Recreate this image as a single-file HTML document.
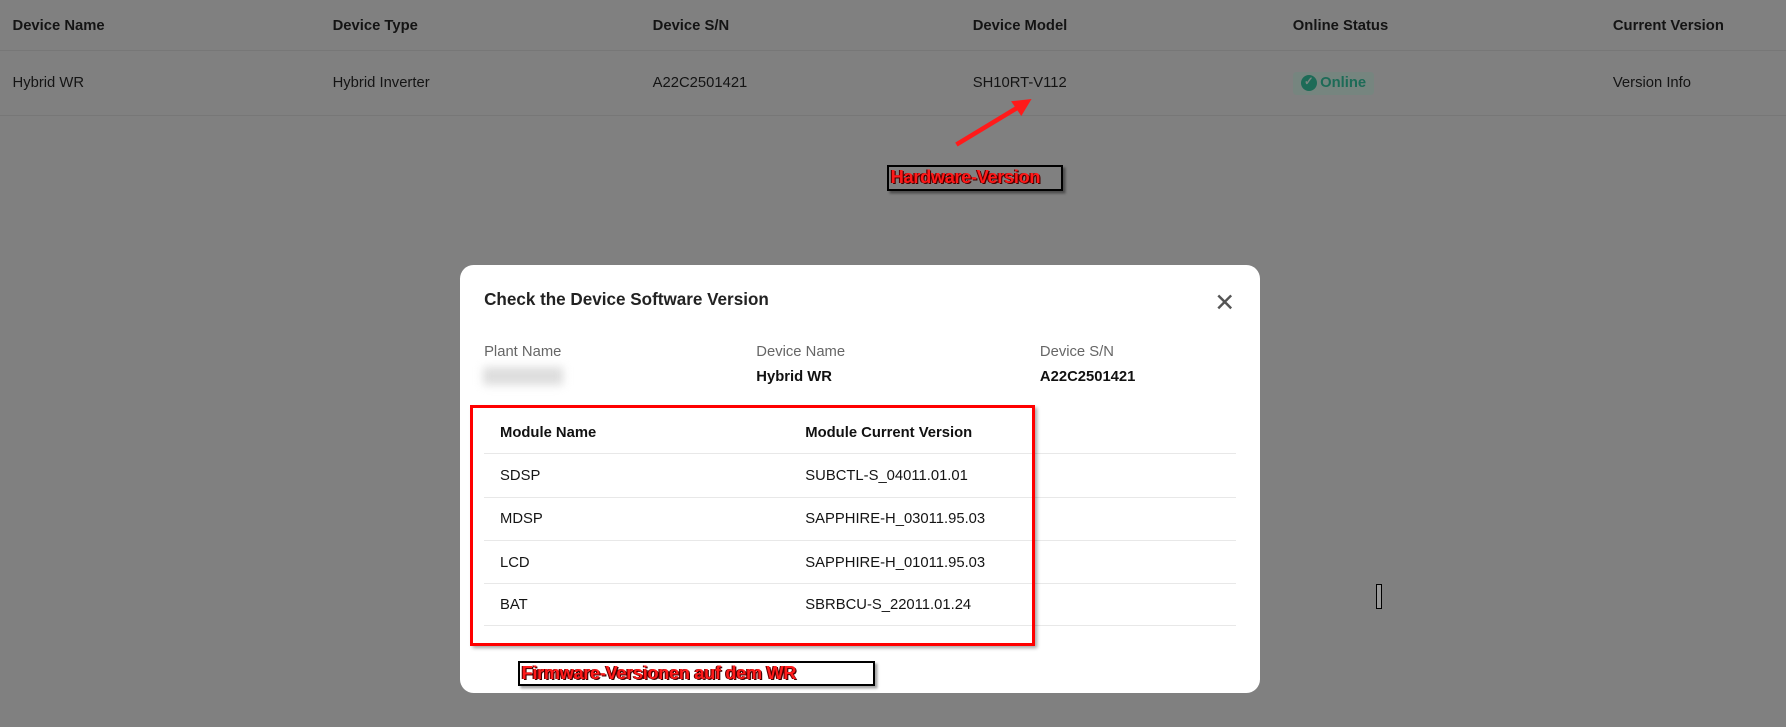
<!DOCTYPE html>
<html><head><meta charset="utf-8"><style>
html,body{margin:0;padding:0}
body{width:1568px;height:638px;zoom:1.13903;background:#808080;font-family:"Liberation Sans",sans-serif;position:relative;overflow:hidden;color:#111}
.a{position:absolute;white-space:nowrap}
.h{font-size:13px;font-weight:bold;color:#141414}
.r{font-size:13px;color:#141414}
.line{position:absolute;height:1px;background:#777}
.m{position:absolute;left:404px;top:233px;width:702px;height:375px;background:#fff;border-radius:12px}
.lab{font-size:13px;color:#666}
.val{font-size:13px;font-weight:bold;color:#111}
.tl{position:absolute;left:21px;width:660px;height:1px;background:#e8e8e8}
.red{color:#ff1a1a;font-weight:bold;font-size:16px;letter-spacing:-0.3px;text-shadow:1px 1px 0 #400,-1px 0 0 #600}
</style></head><body>
<div class="a h" style="left:11px;top:16px">Device Name</div>
<div class="a h" style="left:292px;top:16px">Device Type</div>
<div class="a h" style="left:573px;top:16px">Device S/N</div>
<div class="a h" style="left:854px;top:16px">Device Model</div>
<div class="a h" style="left:1135px;top:16px">Online Status</div>
<div class="a h" style="left:1416px;top:16px">Current Version</div>
<div class="line" style="left:0;top:44px;width:1568px"></div>
<div class="a r" style="left:11px;top:66px">Hybrid WR</div>
<div class="a r" style="left:292px;top:66px">Hybrid Inverter</div>
<div class="a r" style="left:573px;top:66px">A22C2501421</div>
<div class="a r" style="left:854px;top:66px">SH10RT-V112</div>
<div class="a" style="left:1135px;top:63px;width:71px;height:20px;background:#76857f;border-radius:3px"></div>
<div class="a" style="left:1142px;top:66px;width:14px;height:14px;border-radius:50%;background:#1d6b57;color:#7a8782;font-size:10px;line-height:14px;text-align:center;font-weight:bold">✓</div>
<div class="a" style="left:1159px;top:66px;font-size:13px;font-weight:bold;color:#1d6b57">Online</div>
<div class="a r" style="left:1416px;top:66px">Version Info</div>
<div class="line" style="left:0;top:101px;width:1568px"></div>
<svg class="a" style="left:830px;top:80px" width="90" height="55"><line x1="10" y1="47" x2="68" y2="12" stroke="#ff1a1a" stroke-width="4"/><polygon points="76,7 58,9 67,22" fill="#ff1a1a"/></svg>
<div class="a" style="left:779px;top:145px;width:151px;height:19px;border:2px solid #000;box-shadow:2px 2px 2px rgba(0,0,0,.4)"></div>
<div class="a red" style="left:782px;top:147px">Hardware-Version</div>
<div class="a" style="left:1208px;top:513px;width:4px;height:20px;border:1px solid #000;background:#999"></div>
<div class="m">
<div class="a" style="left:21px;top:22px;font-size:15px;font-weight:bold;color:#222">Check the Device Software Version</div>
<div class="a" style="left:662px;top:20px;font-size:22px;color:#555">✕</div>
<div class="a lab" style="left:21px;top:69px">Plant Name</div>
<div class="a lab" style="left:260px;top:69px">Device Name</div>
<div class="a lab" style="left:509px;top:69px">Device S/N</div>
<div class="a" style="left:20px;top:89px;width:70px;height:16px;background:#ddd;filter:blur(4px)"></div>
<div class="a val" style="left:260px;top:91px">Hybrid WR</div>
<div class="a val" style="left:509px;top:91px">A22C2501421</div>
<div class="a val" style="left:35px;top:140px">Module Name</div>
<div class="a val" style="left:303px;top:140px">Module Current Version</div>
<div class="tl" style="top:165px"></div>
<div class="a r" style="left:35px;top:178px">SDSP</div><div class="a r" style="left:303px;top:178px">SUBCTL-S_04011.01.01</div>
<div class="tl" style="top:203px"></div>
<div class="a r" style="left:35px;top:216px">MDSP</div><div class="a r" style="left:303px;top:216px">SAPPHIRE-H_03011.95.03</div>
<div class="tl" style="top:241px"></div>
<div class="a r" style="left:35px;top:254px">LCD</div><div class="a r" style="left:303px;top:254px">SAPPHIRE-H_01011.95.03</div>
<div class="tl" style="top:279px"></div>
<div class="a r" style="left:35px;top:291px">BAT</div><div class="a r" style="left:303px;top:291px">SBRBCU-S_22011.01.24</div>
<div class="tl" style="top:316px"></div>
<div class="a" style="left:9px;top:123px;width:490px;height:206px;border:3px solid #ff0000;box-shadow:2px 2px 3px rgba(0,0,0,.35)"></div>
<div class="a" style="left:51px;top:347px;width:310px;height:19px;border:2px solid #000;box-shadow:2px 2px 2px rgba(0,0,0,.35)"></div>
<div class="a red" style="left:54px;top:349px">Firmware-Versionen auf dem WR</div>
</div>
</body></html>
